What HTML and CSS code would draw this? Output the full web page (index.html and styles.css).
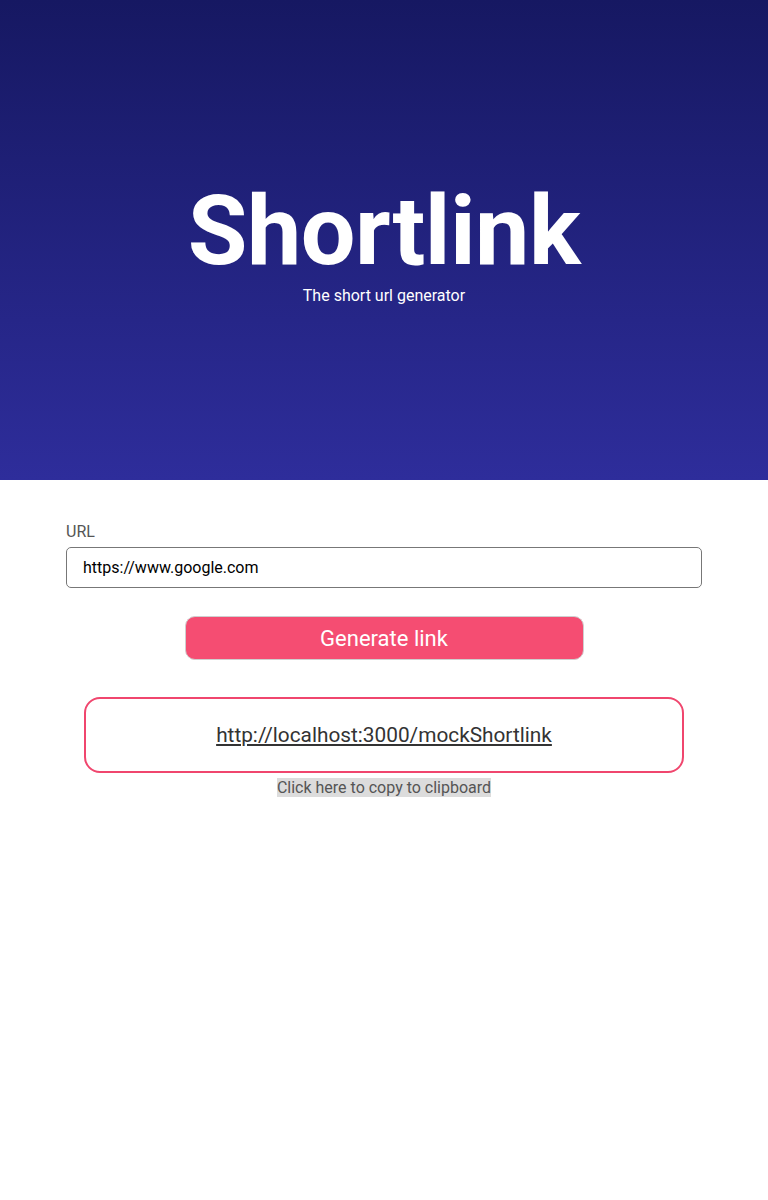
FILE: index.html
```html
<!DOCTYPE html>
<html lang="en">
<head>
<meta charset="utf-8">
<title>Shortlink</title>
<link rel="stylesheet" href="styles.css">
</head>
<body>
<header class="hero">
  <h1 class="hero-title">Shortlink</h1>
  <p class="hero-sub">The short url generator</p>
</header>
<main class="main">
  <form class="form">
    <label class="label" for="url">URL</label>
    <input class="input" id="url" type="text" value="https://www.google.com">
    <button class="btn" type="button">Generate link</button>
  </form>
  <div class="result">
    <a class="result-link" href="#">http://localhost:3000/mockShortlink</a>
  </div>
  <div class="copy-row"><span class="copy">Click here to copy to clipboard</span></div>
</main>
</body>
</html>
```

FILE: styles.css
```css
* { box-sizing: border-box; }
html, body { margin: 0; padding: 0; }
body {
  font-family: Roboto, "Liberation Sans", sans-serif;
  background: #fff;
  width: 768px;
}
.hero {
  height: 480px;
  background: linear-gradient(to bottom, #161862, #2e2d9b);
  color: #fff;
  display: flex;
  flex-direction: column;
  align-items: center;
  justify-content: center;
  padding-top: 6px;
}
.hero-title {
  margin: 0;
  font-size: 97px;
  font-weight: 700;
  line-height: 100px;
  letter-spacing: -0.5px;
}
.hero-sub {
  margin: 6px 0 0;
  font-size: 16px;
  line-height: 18px;
}
.main {
  padding: 43px 66px 0;
  display: flex;
  flex-direction: column;
  align-items: center;
}
.form {
  width: 100%;
  display: flex;
  flex-direction: column;
}
.label {
  font-size: 16px;
  color: #555;
  line-height: 18px;
  margin-bottom: 6px;
}
.input {
  width: 100%;
  height: 41px;
  border: 1px solid #777;
  border-radius: 5px;
  padding: 0 16px;
  font-family: inherit;
  font-size: 16px;
  color: #000;
  outline: none;
}
.btn {
  align-self: center;
  margin-top: 28px;
  width: 399px;
  height: 44px;
  background: #f54d72;
  border: 1px solid #cfcfcf;
  border-radius: 10px;
  color: #fff;
  font-family: inherit;
  font-size: 22px;
  padding: 0;
}
.result {
  margin-top: 37px;
  width: 600px;
  height: 76px;
  border: 2px solid #f0466e;
  border-radius: 16px;
  display: flex;
  align-items: center;
  justify-content: center;
}
.result-link {
  color: #333;
  font-size: 20.8px;
  text-decoration: underline;
}
.copy-row {
  margin-top: 5px;
  text-align: center;
}
.copy {
  background: #dcdcdc;
  color: #555;
  font-size: 16px;
  line-height: 18px;
}
```
